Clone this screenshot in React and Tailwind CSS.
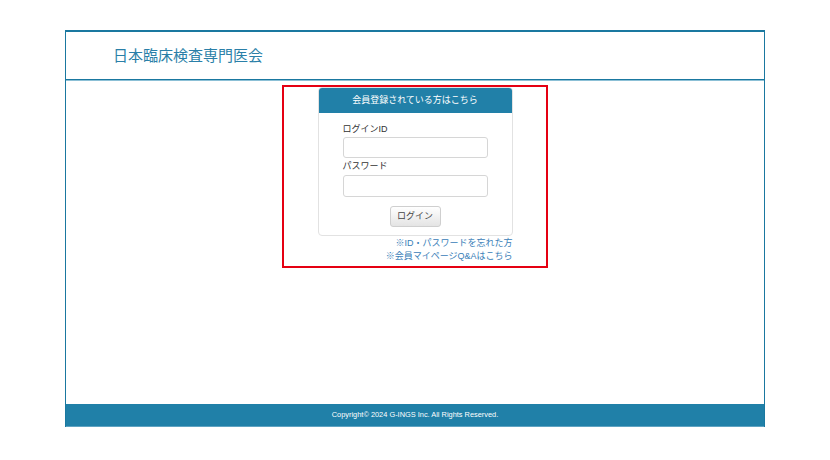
const LoginPage = () => {
  return (
    <div className="min-h-[460px] bg-white pt-[30px]" style={{ fontFamily: '"Liberation Sans", "Noto Sans CJK JP", sans-serif' }}>
      <div className="mx-auto w-[700px] border-x border-t-2 border-[#1a78a0]">
        {/* Header */}
        <div className="flex h-[48px] items-center border-b border-[#1a78a0] pl-[47px]">
          <h1 className="text-[15px] font-normal leading-none text-[#2a7fa8]">日本臨床検査専門医会</h1>
        </div>
        <div className="h-px bg-[#8cc0d6]" />

        {/* Body */}
        <div className="flex h-[323px] justify-center pt-[4px]">
          <div className="flex h-[183px] w-[266px] flex-col items-center border-2 border-[#e50012]">
            <div className="w-[195px] overflow-hidden rounded-[4px] border border-[#e2e2e2] bg-white">
              <div className="flex h-[25px] items-center justify-center bg-[#2180a8] text-[9px] text-white">
                会員登録されている方はこちら
              </div>
              <div className="px-[24px] pt-[10px] pb-[8px]">
                <label className="block text-[9px] leading-[12px] text-[#333]">ログインID</label>
                <input className="mt-[2px] block h-[21px] w-[145px] rounded-[3px] border border-[#d6d6d6] bg-white" />
                <label className="mt-[2px] block text-[9px] leading-[12px] text-[#333]">パスワード</label>
                <input type="password" className="mt-[3px] block h-[22px] w-[145px] rounded-[3px] border border-[#d6d6d6] bg-white" />
                <div className="mt-[9px] flex justify-center">
                  <button className="h-[21px] w-[51px] rounded-[3px] border border-[#cfcfcf] bg-gradient-to-b from-white to-[#e4e4e4] text-[9px] text-[#444]">
                    ログイン
                  </button>
                </div>
              </div>
            </div>
            <div className="flex w-[195px] flex-col items-end pt-[1px] text-[9px] leading-[13px] text-[#3a80b8]">
              <a href="#">※ID・パスワードを忘れた方</a>
              <a href="#">※会員マイページQ&amp;Aはこちら</a>
            </div>
          </div>
        </div>

        {/* Footer */}
        <div className="flex h-[22px] items-center justify-center bg-[#2080a8] text-[7.4px] text-white">
          Copyright© 2024 G-INGS Inc. All Rights Reserved.
        </div>
        <div className="h-px bg-[#5fa3c2]" />
      </div>
    </div>
  )
}

export default function App() {
  return <LoginPage />
}
